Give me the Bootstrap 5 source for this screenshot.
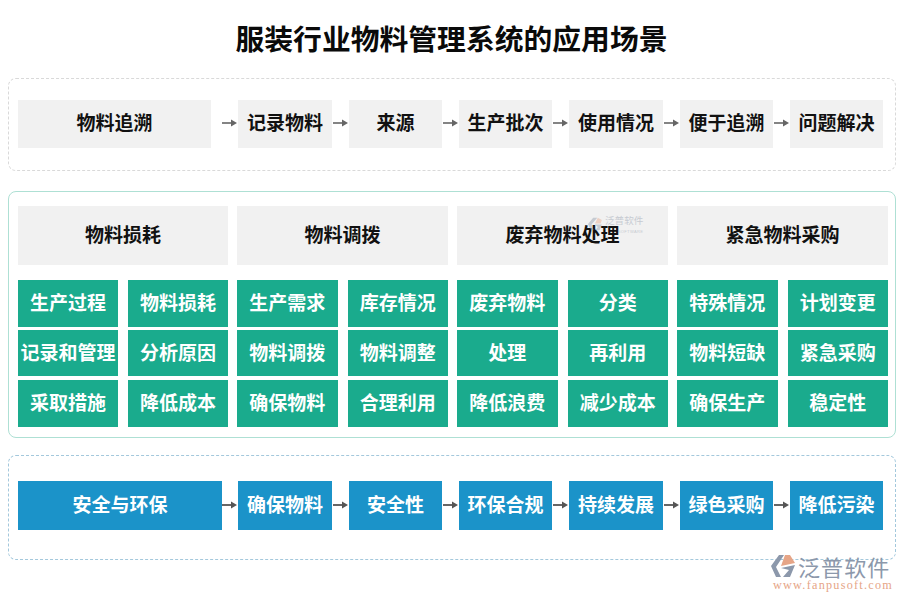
<!DOCTYPE html>
<html lang="zh">
<head>
<meta charset="utf-8">
<title>服装行业物料管理系统的应用场景</title>
<link href="https://cdn.jsdelivr.net/npm/bootstrap@5.3.0/dist/css/bootstrap.min.css" rel="stylesheet">
<style>
html,body{margin:0;background:#fff;}
body{width:900px;height:600px;overflow:hidden;position:relative;font-family:"Noto Sans CJK SC","Liberation Sans",sans-serif;color:#111;}
.page-title{font-size:28.8px;line-height:40px;font-weight:700;text-align:center;margin:0;padding:18px 0 0 3px;height:78px;color:#0a0a0a;}
.sect{margin-left:8px;width:888px;border-radius:8px;}
.sect-a{height:93px;border:1px dashed #d9d9d9;padding:21px 12px 0 9px;margin-bottom:20px;}
.sect-b{height:247px;border:1px solid #aee0d4;padding:14px 7px 0 9px;margin-bottom:17px;}
.sect-c{height:105px;border:1px dashed #a3c8dc;padding:25px 12px 0 9px;}
.flow{height:48px;}
.flow .box{padding-bottom:3px;}
.flow-tall{height:49px;}
.box{display:flex;align-items:center;justify-content:center;font-size:19px;font-weight:700;white-space:nowrap;height:100%;flex:none;padding-bottom:2px;}
.grey{background:#f1f1f1;color:#111;}
.blue{background:#1b93c9;color:#fff;}
.green{background:#1aab8d;color:#fff;}
.w1{width:193px;}.w1b{width:204px;}
.ws{width:94px;}.wt{width:93px;}
.arr{flex:none;width:17px;height:10px;}
.arrw{flex:none;display:flex;align-items:center;justify-content:flex-end;width:17px;height:100%;padding-bottom:2px;}
.arrw.lead{width:27px;}
.arrw.lead-b{width:16px;}
.cols{display:grid;grid-template-columns:210px 211px 211px 211px;column-gap:9px;}
.head{height:59px;margin-bottom:15px;}
.cells{display:grid;grid-template-columns:1fr 1fr;column-gap:10px;row-gap:3px;}
.cells .box{height:47px;padding-bottom:2px;}
.cells .box:nth-child(3),.cells .box:nth-child(4){height:46px;}
.cells .box:nth-child(n+5){margin-top:1px;}
.mark-mid{position:absolute;left:588px;top:215px;display:flex;opacity:.42;align-items:flex-start;gap:2px;pointer-events:none;}
.mark-mid .nm{font-size:9.6px;line-height:11px;color:#8d97a8;font-weight:400;}
.mark-mid .sub{font-size:4px;line-height:5px;color:#8d97a8;font-family:"Liberation Sans",sans-serif;text-align:right;letter-spacing:.4px;margin-top:3px;}
.mark-end{position:absolute;left:770px;top:554px;pointer-events:none;}
.mark-end .nm{font-size:22px;line-height:24px;color:#8c98ab;font-weight:400;letter-spacing:1.1px;margin-left:2px;}
.mark-end .url{font-family:"Liberation Serif",serif;font-size:12.2px;line-height:10px;color:#e6a587;letter-spacing:1.25px;margin:2px 0 0 3px;white-space:nowrap;}
</style>
</head>
<body>
<h1 class="page-title">服装行业物料管理系统的应用场景</h1>

<section class="sect sect-a">
  <div class="d-flex flow">
    <div class="box grey w1">物料追溯</div>
    <div class="arrw lead"><svg class="arr" viewBox="0 0 17 10"><path d="M1 5H12" stroke="#666" stroke-width="1.6"/><path d="M10 1.5L16 5L10 8.5Z" fill="#666"/></svg></div>
    <div class="box grey ws">记录物料</div>
    <div class="arrw"><svg class="arr" viewBox="0 0 17 10"><path d="M1 5H12" stroke="#666" stroke-width="1.6"/><path d="M10 1.5L16 5L10 8.5Z" fill="#666"/></svg></div>
    <div class="box grey wt">来源</div>
    <div class="arrw"><svg class="arr" viewBox="0 0 17 10"><path d="M1 5H12" stroke="#666" stroke-width="1.6"/><path d="M10 1.5L16 5L10 8.5Z" fill="#666"/></svg></div>
    <div class="box grey wt">生产批次</div>
    <div class="arrw"><svg class="arr" viewBox="0 0 17 10"><path d="M1 5H12" stroke="#666" stroke-width="1.6"/><path d="M10 1.5L16 5L10 8.5Z" fill="#666"/></svg></div>
    <div class="box grey ws">使用情况</div>
    <div class="arrw"><svg class="arr" viewBox="0 0 17 10"><path d="M1 5H12" stroke="#666" stroke-width="1.6"/><path d="M10 1.5L16 5L10 8.5Z" fill="#666"/></svg></div>
    <div class="box grey wt">便于追溯</div>
    <div class="arrw"><svg class="arr" viewBox="0 0 17 10"><path d="M1 5H12" stroke="#666" stroke-width="1.6"/><path d="M10 1.5L16 5L10 8.5Z" fill="#666"/></svg></div>
    <div class="box grey wt">问题解决</div>
  </div>
</section>

<section class="sect sect-b">
  <div class="cols">
    <div><div class="box grey head">物料损耗</div>
      <div class="cells">
        <div class="box green">生产过程</div><div class="box green">物料损耗</div>
        <div class="box green">记录和管理</div><div class="box green">分析原因</div>
        <div class="box green">采取措施</div><div class="box green">降低成本</div>
      </div></div>
    <div><div class="box grey head">物料调拨</div>
      <div class="cells">
        <div class="box green">生产需求</div><div class="box green">库存情况</div>
        <div class="box green">物料调拨</div><div class="box green">物料调整</div>
        <div class="box green">确保物料</div><div class="box green">合理利用</div>
      </div></div>
    <div><div class="box grey head">废弃物料处理</div>
      <div class="cells">
        <div class="box green">废弃物料</div><div class="box green">分类</div>
        <div class="box green">处理</div><div class="box green">再利用</div>
        <div class="box green">降低浪费</div><div class="box green">减少成本</div>
      </div></div>
    <div><div class="box grey head">紧急物料采购</div>
      <div class="cells">
        <div class="box green">特殊情况</div><div class="box green">计划变更</div>
        <div class="box green">物料短缺</div><div class="box green">紧急采购</div>
        <div class="box green">确保生产</div><div class="box green">稳定性</div>
      </div></div>
  </div>
</section>

<section class="sect sect-c">
  <div class="d-flex flow-tall">
    <div class="box blue w1b">安全与环保</div>
    <div class="arrw lead-b"><svg class="arr" viewBox="0 0 17 10"><path d="M1 5H12" stroke="#555" stroke-width="1.8"/><path d="M10 1.5L16 5L10 8.5Z" fill="#555"/></svg></div>
    <div class="box blue ws">确保物料</div>
    <div class="arrw"><svg class="arr" viewBox="0 0 17 10"><path d="M1 5H12" stroke="#555" stroke-width="1.8"/><path d="M10 1.5L16 5L10 8.5Z" fill="#555"/></svg></div>
    <div class="box blue wt">安全性</div>
    <div class="arrw"><svg class="arr" viewBox="0 0 17 10"><path d="M1 5H12" stroke="#555" stroke-width="1.8"/><path d="M10 1.5L16 5L10 8.5Z" fill="#555"/></svg></div>
    <div class="box blue wt">环保合规</div>
    <div class="arrw"><svg class="arr" viewBox="0 0 17 10"><path d="M1 5H12" stroke="#555" stroke-width="1.8"/><path d="M10 1.5L16 5L10 8.5Z" fill="#555"/></svg></div>
    <div class="box blue ws">持续发展</div>
    <div class="arrw"><svg class="arr" viewBox="0 0 17 10"><path d="M1 5H12" stroke="#555" stroke-width="1.8"/><path d="M10 1.5L16 5L10 8.5Z" fill="#555"/></svg></div>
    <div class="box blue wt">绿色采购</div>
    <div class="arrw"><svg class="arr" viewBox="0 0 17 10"><path d="M1 5H12" stroke="#555" stroke-width="1.8"/><path d="M10 1.5L16 5L10 8.5Z" fill="#555"/></svg></div>
    <div class="box blue wt">降低污染</div>
  </div>
</section>

<div class="mark-mid">
  <svg width="15" height="18" viewBox="0 0 26 26"><path d="M9 2L16 2L6 14L10 24L4 22L0 13Z" fill="#8d97a8"/><path d="M17 2L24 6L22 12L12 12Z" fill="#e6a587"/><path d="M12 14L24 14L20 24L13 24L17 18Z" fill="#8d97a8"/></svg>
  <div><div class="nm">泛普软件</div><div class="sub">SOFTWARE</div></div>
</div>

<div class="mark-end d-flex flex-column">
  <div class="d-flex align-items-center">
    <svg width="26" height="24" viewBox="0 0 26 24"><path d="M9 1L14 1L6 13L11 23L6 23L1 12Z" fill="#8c98ab"/><path d="M15 1L20 1L25 9L11 12Z" fill="#e6a587"/><path d="M11 14L25 11L20 23L13 23L19 16Z" fill="#8c98ab"/></svg>
    <span class="nm">泛普软件</span>
  </div>
  <div class="url">www.fanpusoft.com</div>
</div>

<script src="https://cdn.jsdelivr.net/npm/bootstrap@5.3.0/dist/js/bootstrap.bundle.min.js"></script>
</body>
</html>
